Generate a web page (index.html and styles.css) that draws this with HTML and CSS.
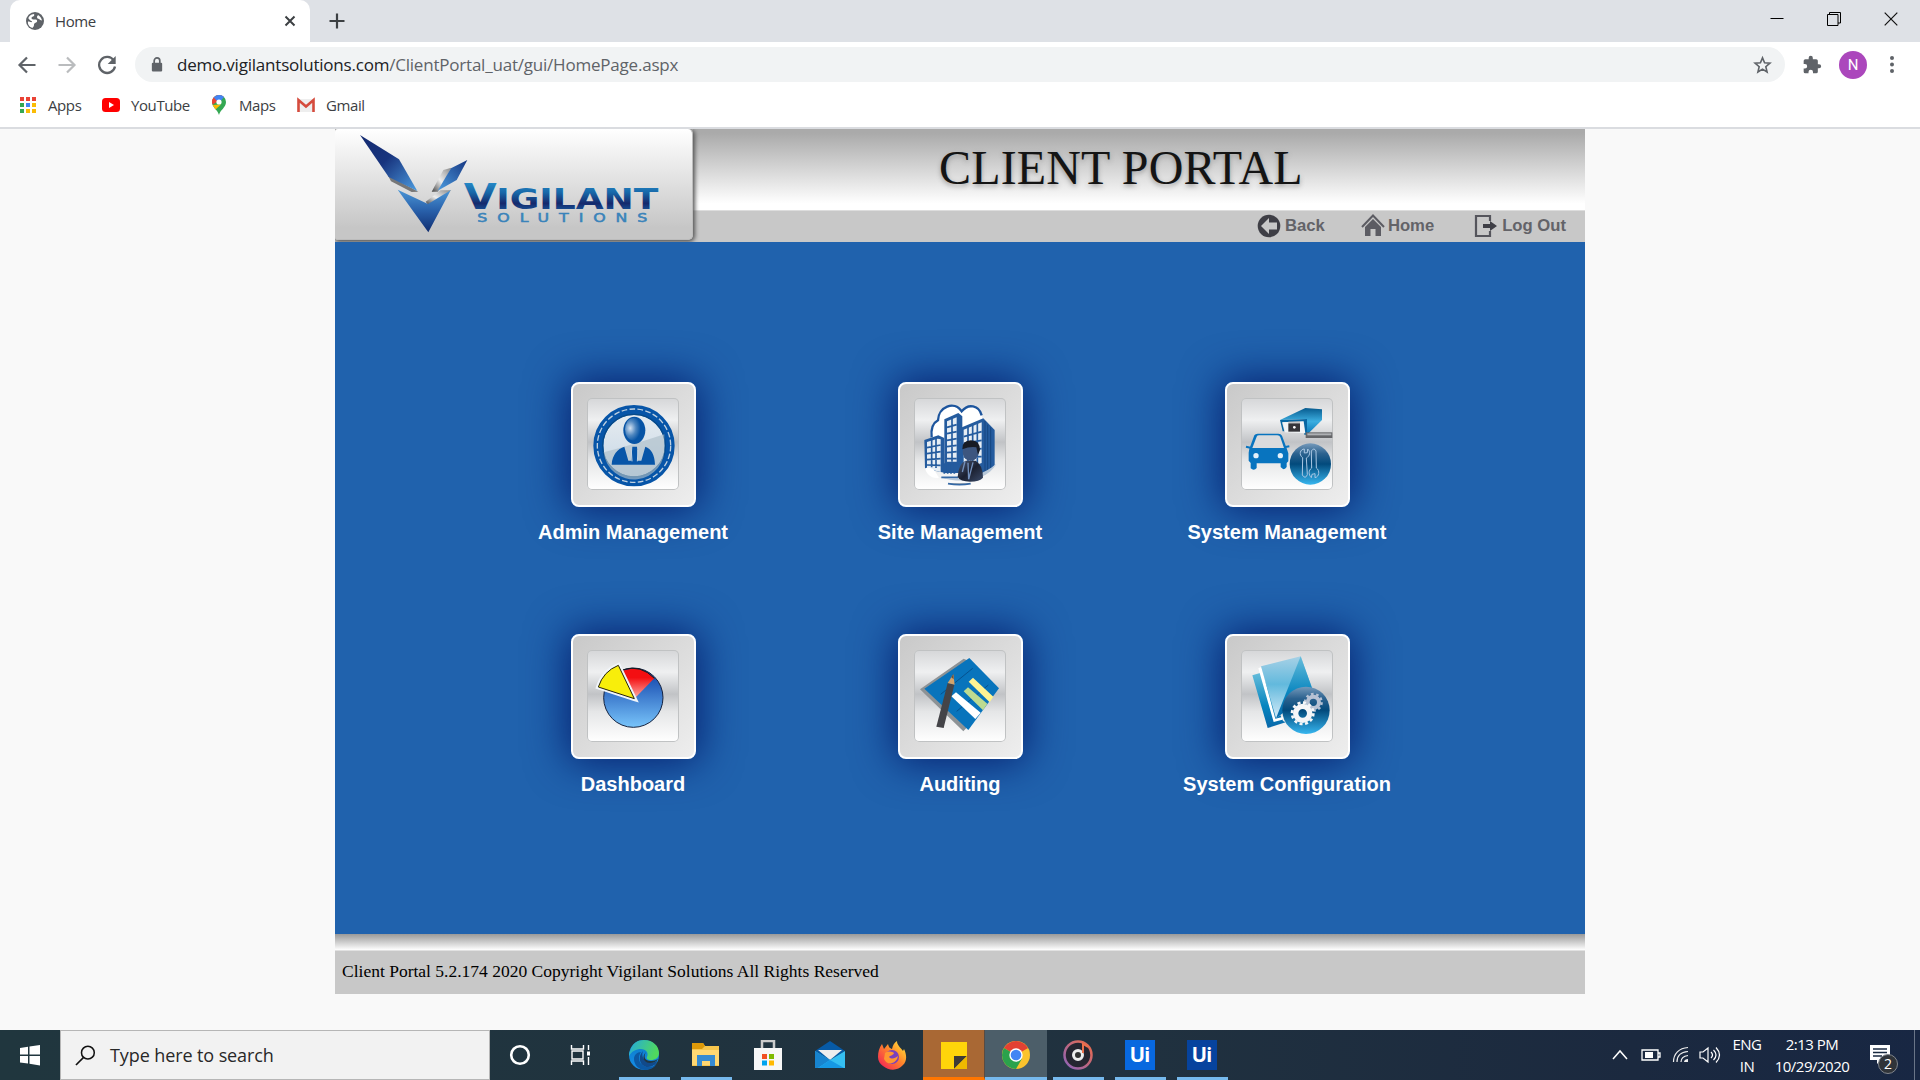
FILE: index.html
```html
<!DOCTYPE html>
<html lang="en">
<head>
<meta charset="utf-8">
<title>Home</title>
<link rel="stylesheet" href="styles.css">
</head>
<body>
<div class="tabstrip">
  <div class="tab">
    <svg class="globe" viewBox="0 0 20 20"><circle cx="10" cy="10" r="9" fill="#5f6368"/><path d="M9 3c1 1.500-.5 2.500-2 3-1 1-.5 2 1 2.500h3c1.500.5 1.500 2.500 0 3s-2 1-2 2.500-1 2-1.500 3C4 16 2.500 13 3 10.500c1.500 0 3 1 4 .5S4 9 3.500 7.500 6 3 9 3zM13 4c2 1 3.500 3 4 5.500-1.500 0-2-1-3-1.500s-2-.5-2-2 1-1 1-2z" fill="#fff"/></svg>
    <span class="tab-title">Home</span>
    <svg class="tab-close" viewBox="0 0 12 12"><path d="M1.500 1.500l9 9m0-9l-9 9" stroke="#3c4043" stroke-width="2"/></svg>
  </div>
  <svg class="newtab" viewBox="0 0 16 16"><path d="M8 .5v15M.5 8h15" stroke="#3c4043" stroke-width="2.200"/></svg>
  <div class="window-controls">
    <svg viewBox="0 0 14 14"><path d="M.5 6.500h13" stroke="#000"/></svg>
    <svg viewBox="0 0 14 14"><path d="M.5 2.500h10.500v11H.5zM2.500 2.500v-2h11v10.500H11" fill="none" stroke="#000"/></svg>
    <svg viewBox="0 0 14 14"><path d="M.7.7l12.600 12.600m0-12.600L.7 13.300" stroke="#111" stroke-width="1.200"/></svg>
  </div>
</div>
<div class="toolbar">
  <svg class="nav-icon" viewBox="0 0 20 20"><path d="M18.500 10H3M10 2.500L2.500 10l7.500 7.500" fill="none" stroke="#5f6368" stroke-width="2.200"/></svg>
  <svg class="nav-icon" viewBox="0 0 20 20"><path d="M1.500 10H17M10 2.500l7.500 7.500-7.500 7.500" fill="none" stroke="#babcbe" stroke-width="2.200"/></svg>
  <svg class="nav-icon" viewBox="0 0 20 20"><path d="M16.800 5.500A8 8 0 1 0 18 11.500" fill="none" stroke="#5f6368" stroke-width="2.300"/><path d="M18.700 1v8h-8z" fill="#5f6368"/></svg>
  <div class="omnibox">
    <svg class="lock" viewBox="0 0 12 16"><path d="M3 7V4a3 3 0 0 1 6 0v3" fill="none" stroke="#5f6368" stroke-width="1.800"/><rect x=".5" y="6" width="11" height="9.500" rx="1.200" fill="#5f6368"/></svg>
    <span class="url"><b>demo.vigilantsolutions.com</b>/ClientPortal_uat/gui/HomePage.aspx</span>
    <svg class="star" viewBox="0 0 20 20"><path d="M10 2.500l2.200 5.200 5.600.4-4.300 3.700 1.300 5.500-4.800-3-4.800 3 1.300-5.500-4.300-3.700 5.600-.4z" fill="none" stroke="#5f6368" stroke-width="1.700"/></svg>
  </div>
  <svg class="ext" viewBox="0 0 24 24"><path d="M20.500 11H19V7a2 2 0 0 0-2-2h-4V3.500a2.500 2.500 0 0 0-5 0V5H4a2 2 0 0 0-2 2v3.800h1.500a2.700 2.700 0 0 1 0 5.400H2V20a2 2 0 0 0 2 2h3.800v-1.500a2.700 2.700 0 0 1 5.400 0V22H17a2 2 0 0 0 2-2v-4h1.500a2.500 2.500 0 0 0 0-5z" fill="#5f6368"/></svg>
  <span class="avatar">N</span>
  <svg class="menu" viewBox="0 0 6 20"><g fill="#5f6368"><circle cx="3" cy="3" r="2"/><circle cx="3" cy="9.500" r="2"/><circle cx="3" cy="16" r="2"/></g></svg>
</div>
<div class="bookmarks">
  <div class="bookmark"><svg viewBox="0 0 18 18"><g fill="#ea4335"><path d="M1 1h4v4H1zM7 1h4v4H7zM13 1h4v4h-4z"/></g><path d="M1 7h4v4H1zM1 13h4v4H1z" fill="#34a853"/><path d="M7 7h4v4H7z" fill="#4285f4"/><path d="M13 7h4v4h-4zM7 13h4v4H7zM13 13h4v4h-4z" fill="#fbbc05"/></svg><span class="w-apps">Apps</span></div>
  <div class="bookmark"><svg viewBox="0 0 18 18"><rect y="2" width="18" height="14" rx="3.500" fill="#f00"/><path d="M7 6l5 3-5 3z" fill="#fff"/></svg><span class="w-youtube">YouTube</span></div>
  <div class="bookmark"><svg viewBox="0 0 18 20"><path d="M9 20C8.200 15.500 2 12.500 2 7a7 7 0 0 1 14 0c0 5.500-6.200 8.500-7 13z" fill="#34a853"/><path d="M2.700 9.800L13.800 2A7 7 0 0 0 3.600 2.600 7 7 0 0 0 2.700 9.800z" fill="#ea4335"/><path d="M3.700 2.500A7 7 0 0 1 14 2L9 8z" fill="#4285f4"/><path d="M2.700 10L11 9.500 5.500 14.500z" fill="#fbbc05"/><circle cx="9" cy="7" r="2.600" fill="#fff"/></svg><span class="w-maps">Maps</span></div>
  <div class="bookmark gmail"><svg viewBox="0 0 18 18"><path d="M1 3h16v13H1z" fill="#eee"/><path d="M1.500 16V4L9 10.500 16.500 4v12" fill="none" stroke="#d54b3d" stroke-width="2.600"/></svg><span class="w-gmail">Gmail</span></div>
</div>
<main class="viewport">
  <div class="portal">
    <header class="header">
      <div class="logo">
        <svg viewBox="30 27 1071 330">
          <defs>
            <linearGradient id="wing" x1="0" y1="0" x2="1" y2="1"><stop offset="0" stop-color="#142a70"/><stop offset=".45" stop-color="#18347e"/><stop offset="1" stop-color="#4c9ce0"/></linearGradient>
            <linearGradient id="wing2" x1="1" y1="0" x2="0" y2="1"><stop offset="0" stop-color="#163681"/><stop offset="1" stop-color="#4c9ce0"/></linearGradient>
            <linearGradient id="tip" x1="0" y1="0" x2="0" y2="1"><stop offset="0" stop-color="#4b96d6"/><stop offset=".5" stop-color="#285fa9"/><stop offset="1" stop-color="#102d70"/></linearGradient>
            <linearGradient id="silver" x1="0" y1="1" x2="1" y2="0"><stop offset="0" stop-color="#444"/><stop offset=".45" stop-color="#eee"/><stop offset="1" stop-color="#888"/></linearGradient>
            <linearGradient id="word" x1="0" y1="190" x2="0" y2="270" gradientUnits="userSpaceOnUse"><stop offset="0" stop-color="#2487c5"/><stop offset=".35" stop-color="#1767a8"/><stop offset=".75" stop-color="#15296c"/><stop offset="1" stop-color="#174f94"/></linearGradient>
          </defs>
          <path d="M188 165l92 50-20 1-62-32z" fill="#777"/>
          <path d="M105 45l117 73 55 95-86-42z" fill="url(#wing)"/>
          <path d="M320 215l35-65 24-7-40 72z" fill="url(#silver)"/>
          <path d="M378 145l49-25-32 60-57 32z" fill="url(#wing2)"/>
          <path d="M302 245l45-34h32l-70 43z" fill="url(#silver)"/>
          <path d="M218 209l91 43 68-41-67 126z" fill="url(#tip)"/>
          <g fill="url(#word)" font-family="DejaVu Sans" font-weight="bold">
            <text x="416" y="268" font-size="107" textLength="99" lengthAdjust="spacingAndGlyphs">V</text>
            <text x="514" y="268" font-size="86" textLength="486" lengthAdjust="spacingAndGlyphs">IGILANT</text>
          </g>
          <text x="457" y="305" font-family="DejaVu Sans" font-size="35" fill="#3a83ba" stroke="#3a83ba" stroke-width="1.500" textLength="540" lengthAdjust="spacingAndGlyphs" letter-spacing="22">SOLUTIONS</text>
        </svg>
      </div>
      <div class="header-main">
        <h1 class="title">CLIENT PORTAL</h1>
        <nav class="nav">
          <a class="nav-link"><svg viewBox="0 0 24 24"><circle cx="12" cy="12" r="11.300" fill="#3f3f46"/><path d="M4 12l8-8v4.500h8v7h-8V20z" fill="#c8c8c8"/></svg>Back</a>
          <a class="nav-link home"><svg viewBox="0 0 24 24"><path d="M1 13L12 1.500 23 13" fill="none" stroke="#5c5c63" stroke-width="2"/><path d="M12 5l8 8v9h-5.500v-7h-5v7H4v-9z" fill="#5c5c63"/></svg>Home</a>
          <a class="nav-link logout"><svg viewBox="0 0 24 24"><path d="M16 7V2H2v20h14v-5" fill="none" stroke="#55555c" stroke-width="2.200"/><path d="M9 10h7V7l7 5-7 5v-3H9z" fill="#3f3f46"/></svg>Log Out</a>
        </nav>
      </div>
    </header>
    <section class="tiles">
      <a class="item"><span class="tile"><span class="frame"><svg viewBox="172 144 276 276">
        <defs><linearGradient id="disc" x1="0" y1="0" x2="0" y2="1"><stop offset="0" stop-color="#e8edf0"/><stop offset="1" stop-color="#c3d5e6"/></linearGradient><radialGradient id="face" cx=".3" cy=".45" r=".6"><stop offset="0" stop-color="#d3e2f2"/><stop offset=".55" stop-color="#4e86bf"/><stop offset="1" stop-color="#0754a5"/></radialGradient></defs>
        <circle cx="313" cy="287" r="107" fill="url(#disc)" stroke="#0755a8" stroke-width="30"/>
        <circle cx="313" cy="287" r="94" fill="none" stroke="#074a88" stroke-width="4"/>
        <path d="M222 307q80-20 182-54v34a91 91 0 0 1-182 20z" fill="#aebfca" opacity=".65"/>
        <circle cx="313" cy="287" r="110" fill="none" stroke="#bfd0e0" stroke-width="4" stroke-dasharray="17 7"/>
        <ellipse cx="314" cy="241" rx="33" ry="41" fill="#0754a5"/><ellipse cx="312" cy="238" rx="26" ry="34" fill="url(#face)"/>
        <path d="M246 344c2-31 18-47 38-54l12 42h9l3-42h14l3 42h10l12-42c18 7 28 23 29 54z" fill="#0755a8"/><path d="M305 300l2 34M325 300l-2 34" stroke="#c5d5e3" stroke-width="3"/>
      </svg></span></span><span class="label">Admin Management</span></a>
      <a class="item"><span class="tile"><span class="frame"><svg viewBox="163 144 276 276">
        <defs><linearGradient id="man" x1="0" y1="0" x2="1" y2="1"><stop offset="0" stop-color="#4c5b79"/><stop offset=".5" stop-color="#1b2030"/><stop offset="1" stop-color="#3a4a69"/></linearGradient></defs>
        <path d="M214 265c-4-26 0-45 20-55 2-39 50-58 73-30 22-27 56-14 60 18l8 80-90 70z" fill="#fff"/>
        <path d="M216 262c-3-26 4-43 19-51 1-41 49-60 71-27 20-25 52-18 60 12" fill="none" stroke="#1d559d" stroke-width="7"/>
        <path d="M194 270l42-14 18 8v104l-58-12z" fill="#245b9e"/><path d="M202 276l32-10 9 2v98l-41-10z" fill="#e6edf4"/><path d="M202 293l41-8m-41 26l41-6m-41 24l41-3m-41 19l41 1m-27-80v86m13-91v93" stroke="#245b9e" stroke-width="5"/>
        <path d="M254 208l42-19 12 10v170h-54z" fill="#245b9e"/><path d="M262 214l29-12v133h-29z" fill="#e6edf4"/><path d="M262 232l29-8m-29 27l29-6m-29 26l29-5m-29 24l29-4m-29 22l29-3m-29 21h29m-14-125v134" stroke="#245b9e" stroke-width="5"/>
        <path d="M307 232l64-27 34 35v105l-28 28h-70z" fill="#245b9e"/><path d="M312 239l54-22v122l-54 18z" fill="#e6edf4"/><path d="M312 260l54-15m-54 35l54-9m-54 30l54-5m-54 25l54-1m-41-91v120m14-125v120m14-125v120" stroke="#245b9e" stroke-width="5"/>
        <path d="M376 213v155M384 224v139M393 232v123" stroke="#164781" stroke-width="3"/>
        <path d="M247 342h50m-43 1v28m10-28v28m10-28v28m10-28v28" stroke="#245b9e" stroke-width="5"/>
        <path d="M196 355c28-7 31 14 42 28-21 4-37-8-42-28z" fill="#fff"/><path d="M238 380c55 13 120 5 172-38-30 53-109 60-172 38z" fill="#b8c8d9"/><path d="M245 382h50m-30 19q35 6 68 0" stroke="#3569a6" stroke-width="5"/>
        <path d="M294 381q2-40 24-49h30q22 13 22 51-10 12-39 12t-37-14z" fill="url(#man)"/><path d="M316 334l-8 32m17-28l2 50 13-51" fill="none" stroke="#7391bd" stroke-width="4"/>
        <ellipse cx="333" cy="305" rx="24" ry="28" fill="#3d567f"/><path d="M308 298q-2-26 26-27 27 1 27 29l-6 14-5-22q-20-3-42 6z" fill="#171b24"/>
      </svg></span></span><span class="label">Site Management</span></a>
      <a class="item"><span class="tile"><span class="frame"><svg viewBox="184 144 276 276">
        <defs><linearGradient id="camera" x1="0" y1="0" x2="0" y2="1"><stop offset="0" stop-color="#075b8f"/><stop offset=".5" stop-color="#3caee0"/><stop offset="1" stop-color="#0674b6"/></linearGradient><linearGradient id="orb" x1="0" y1="0" x2="0" y2="1"><stop offset="0" stop-color="#759abb"/><stop offset=".25" stop-color="#2c628f"/><stop offset=".5" stop-color="#024a7c"/><stop offset="1" stop-color="#37b6ef"/></linearGradient></defs>
        <path d="M209 296l15-40q3-5 10-5h62q8 0 11 6l14 38 5 15v24l-5 5v12q-8 13-18 0v-11h-72v14q-8 10-18 1v-16l-6-7v-24z" fill="#0874bf"/><path d="M218 294l13-34q1-4 8-4h54q7 0 9 6l11 32z" fill="#dadbdd"/><path d="M199 290l13 3m105-2l12-2" stroke="#0874bf" stroke-width="6"/><circle cx="229" cy="317" r="8" fill="#e4f1fa"/><circle cx="302" cy="317" r="8" fill="#e4f1fa"/>
        <path d="M301 210l76-36 50 4v32l-45 44-5-47z" fill="url(#camera)"/><path d="M301 210l81-3v47h-8l-4-39-63 2 7 27h-5z" fill="#0767a3"/><path d="M310 217l62-3 5 36-61-3z" fill="#f1f4f6"/><rect x="326" y="220" width="35" height="25" fill="#353539"/><circle cx="344" cy="232" r="4" fill="#fff"/><path d="M326 216h35" stroke="#999" stroke-width="3"/>
        <path d="M382 247h76v17h-80v-17z" fill="#646568"/><path d="M383 250h72v6h-72z" fill="#aeb0b3"/>
        <circle cx="392" cy="342" r="62" fill="url(#orb)"/><g fill="none" stroke="#a9c7e4" stroke-width="3"><path d="M369 323c-13-9-7-26 5-26v12l9-1 1-11c10 8 6 22-4 27l3 50q-6 15-15 1z"/><path d="M396 354l-1-51q8-12 14 0l1 51c12 8 8 27-4 29v-12l-9 2-2 10c-9-9-9-22 1-29z"/></g>
      </svg></span></span><span class="label">System Management</span></a>
      <a class="item"><span class="tile"><span class="frame"><svg viewBox="172 150 276 276">
        <defs><linearGradient id="pie" x1="0" y1="0" x2="0" y2="1"><stop offset="0" stop-color="#0a3ba6"/><stop offset="1" stop-color="#78c4fa"/></linearGradient><linearGradient id="red" x1="0" y1="0" x2="0" y2="1"><stop offset=".3" stop-color="#f40f12"/><stop offset="1" stop-color="#ffb1aa"/></linearGradient></defs>
        <circle cx="311" cy="293" r="89" fill="url(#pie)" stroke="#152340" stroke-width="3"/><path d="M314 296L271 216q61-27 103 19z" fill="url(#red)"/><path d="M281 209q53-16 93 26" fill="none" stroke="#181818" stroke-width="3"/>
        <path d="M314 296L206 261q15-47 60-65z" fill="#fff" stroke="#f1f5fa" stroke-width="14"/><path d="M314 296L206 261q15-47 60-65z" fill="#f8ee0b" stroke="#26220c" stroke-width="3"/>
      </svg></span></span><span class="label">Dashboard</span></a>
      <a class="item"><span class="tile"><span class="frame"><svg viewBox="163 150 276 276">
        <path d="M181 268l131-92 14 6-100 87 99 110-14 15z" fill="#8d9295"/><path d="M194 266l135-92 89 91-92 125z" fill="#0874bc"/><path d="M243 283l96-78m-48 129l95-79" stroke="#06518e" stroke-width="3"/><path d="M275 289l14-12 74 61-16 19z" fill="#fff"/><path d="M312 274l13-12 58 49-13 20z" fill="#bddb90"/><path d="M327 245l13-12 61 57-11 17z" fill="#fff393"/>
        <path d="M264 249l20 5-32 130-22-4z" fill="#444448"/><path d="M264 249l17-26 4 31z" fill="#d3a36b"/><path d="M275 232l6-10 1 16z" fill="#705038"/>
      </svg></span></span><span class="label">Auditing</span></a>
      <a class="item"><span class="tile"><span class="frame"><svg viewBox="184 150 276 276">
        <defs><linearGradient id="book" x1="0" y1="0" x2="0" y2="1"><stop offset="0" stop-color="#a7d1e6"/><stop offset=".45" stop-color="#62b9dd"/><stop offset="1" stop-color="#d3eaf7"/></linearGradient><linearGradient id="back" x1="0" y1="0" x2="0" y2="1"><stop offset="0" stop-color="#66bddb"/><stop offset=".6" stop-color="#0785bf"/><stop offset="1" stop-color="#0767a9"/></linearGradient></defs>
        <path d="M218 226l26-8 66 145 8 4-54 17z" fill="url(#back)"/><path d="M236 205l9-4 42 155 24-6-3 9-26 7z" fill="#fff"/><path d="M244 199l119-30 37 103-111 83z" fill="url(#book)"/><path d="M363 169L289 355l111-83z" fill="url(#back)"/>
        <circle cx="379" cy="331" r="71" fill="url(#orb)"/><g fill="none"><g stroke="#b7c2d4"><circle cx="401" cy="307" r="17" stroke-width="12"/><circle cx="401" cy="307" r="25" stroke-width="7" stroke-dasharray="7.850 7.850"/></g><g stroke="#f5f6f8"><circle cx="369" cy="340" r="21" stroke-width="16"/><circle cx="369" cy="340" r="32" stroke-width="8" stroke-dasharray="9.140 7.620"/></g></g>
      </svg></span></span><span class="label">System Configuration</span></a>
    </section>
    <div class="footer-edge"></div>
    <footer class="footer"><span>Client Portal 5.2.174 2020 Copyright Vigilant Solutions All Rights Reserved</span></footer>
  </div>
</main>
<div class="taskbar">
  <div class="start"><svg viewBox="0 0 22 22"><path d="M1 4l8-1.200v7.700H1zM10.500 2.500L21 1v9.500H10.500zM1 12h8v7.500L1 18.400zM10.500 12H21v9.500l-10.500-1.700z" fill="#fff"/></svg></div>
  <div class="search"><svg viewBox="0 0 22 22"><circle cx="13.500" cy="8" r="6.700" fill="none" stroke="#111" stroke-width="1.600"/><path d="M9 13l-8 8" stroke="#111" stroke-width="1.700"/></svg><span>Type here to search</span></div>
  <div class="apps">
    <div class="app"><svg viewBox="0 0 30 30"><circle cx="15" cy="15" r="8.800" fill="none" stroke="#fff" stroke-width="2.600"/></svg></div>
    <div class="app"><svg class="taskview" viewBox="0 0 30 30"><path d="M4.500 5v4h12V5M4.500 25v-4h12v4M5 11h11v8H5zM21.500 5v5m0 7v8" fill="none" stroke="#fff" stroke-width="1.400"/><path d="M20 11.500h3v4h-3z" fill="#fff"/></svg></div>
    <div class="app open"><svg viewBox="0 0 30 30"><defs><linearGradient id="edgeTop" x1="0" y1="0" x2="1" y2=".3"><stop offset="0" stop-color="#23a9df"/><stop offset="1" stop-color="#50d95d"/></linearGradient><linearGradient id="edgeSide" x1="0" y1="0" x2="0" y2="1"><stop offset="0" stop-color="#0b7bc6"/><stop offset="1" stop-color="#168ee9"/></linearGradient></defs><circle cx="15" cy="15" r="15" fill="url(#edgeSide)"/><path d="M1 11C3 3 9 0 15 0c9 0 15 6 15 13 0 5-4 7-8 7-3 0-5-1-4-3 2-4-1-8-6-8S3 11 0 16c0-2 0-3 1-5z" fill="url(#edgeTop)"/><path d="M12 12c-5 7 0 15 8 15 3 0 6-1 8-4-3 6-8 7-12 7-7 0-11-6-11-11 0-4 3-7 7-7z" fill="#0c59a4"/><path d="M14 11c-3 7 4 15 14 10 1 1-3 6-9 6-8 0-11-10-5-16z" fill="#114a8b"/><path d="M17 12c-3 5-1 9 5 9 3 0 5-1 7-2-1 2-4 4-8 4-6 0-9-6-4-11z" fill="#203643"/></svg></div>
    <div class="app open"><svg viewBox="0 0 30 30"><path d="M1 3h11l2 3h14v20H1z" fill="#f7c64d"/><path d="M1 3h11l2 3-3 3H1z" fill="#dd9908"/><path d="M1 10h27v15H1z" fill="#ffd873"/><path d="M6 15h18v11h-5v-5h-8v5H6z" fill="#368bd2"/></svg></div>
    <div class="app"><svg viewBox="0 0 30 30"><path d="M9 9V1h12v8" fill="none" stroke="#ccc" stroke-width="2.500"/><path d="M1 8h28v22H1z" fill="#f7f7f7"/><path d="M9 14h5v5H9z" fill="#f25022"/><path d="M16 14h5v5h-5z" fill="#7fba00"/><path d="M9 20.500h5v5H9z" fill="#00a4ef"/><path d="M16 20.500h5v5h-5z" fill="#ffb900"/></svg></div>
    <div class="app"><svg viewBox="0 0 30 30"><path d="M0 11L15 1l15 10-15 9z" fill="#075aa6"/><path d="M3 10h24L15 20z" fill="#eee"/><path d="M0 11l15 9 15-9v17H0z" fill="#35bff2"/><path d="M0 11l15 9-12 8H0z" fill="#1784cf"/><path d="M3 28l12-8 14 8z" fill="#1698e4"/></svg></div>
    <div class="app"><svg viewBox="0 0 30 30"><defs><linearGradient id="fox" x1="1" y1="0" x2="0" y2="1"><stop offset="0" stop-color="#fff13b"/><stop offset=".45" stop-color="#ff862b"/><stop offset="1" stop-color="#f0115d"/></linearGradient></defs><path d="M1 17c0-5 1-9 4-13l2 5 4-5c1 4 2 4 4 5 1-4 2-6 5-8 0 4 3 6 6 10l1-2c3 6 3 12-1 16-5 6-14 6-20 1-3-2-5-5-5-9z" fill="url(#fox)"/><circle cx="15" cy="17" r="7" fill="#7941bd"/><path d="M8 13c4-3 8-1 9 0-1 3-4 2-5 4 3 3 6 1 9-1-1 7-10 11-14 3z" fill="#ff9731"/></svg></div>
    <div class="app notes"><svg viewBox="0 0 30 30"><path d="M2 2h26v27H2z" fill="#ffd50a"/><path d="M15 29V16h13z" fill="#3d3b37"/><path d="M15 29l13-13v13z" fill="#efb900"/></svg></div>
    <div class="app active"><svg viewBox="0 0 30 30"><circle cx="15" cy="15" r="14" fill="#fbc32d"/><path d="M15 15L2.900 8A14 14 0 0 1 27.100 8z" fill="#e34133"/><path d="M2.900 8A14 14 0 0 0 15 29l6-10.500-6-3.500z" fill="#2ba24c"/><circle cx="15" cy="15" r="6.700" fill="#fff"/><circle cx="15" cy="15" r="5.300" fill="#4285f4"/></svg></div>
    <div class="app open"><svg viewBox="0 0 30 30"><defs><linearGradient id="groove" x1="1" y1="0" x2="0" y2="1"><stop offset="0" stop-color="#ef6b45"/><stop offset="1" stop-color="#8a63bd"/></linearGradient></defs><circle cx="15" cy="15" r="13.500" fill="#262631" stroke="url(#groove)" stroke-width="2.500"/><circle cx="15" cy="15" r="4.500" fill="#333" stroke="#eee" stroke-width="3"/><path d="M20 13V4l5 3" fill="none" stroke="#ed704b" stroke-width="2"/></svg></div>
    <div class="app open"><span class="uipath">Ui</span></div>
    <div class="app open"><span class="uipath dark">Ui</span></div>
  </div>
  <div class="tray">
    <svg class="chevron" viewBox="0 0 18 18"><path d="M2 13l7-8 7 8" fill="none" stroke="#fff" stroke-width="1.500"/></svg>
    <svg class="battery" viewBox="0 0 20 14"><path d="M1 2h16v10H1zM17.500 5H19v4h-1.500" fill="none" stroke="#fff" stroke-width="1.300"/><path d="M4 4h8v6H4z" fill="#fff"/></svg>
    <svg class="wifi" viewBox="0 0 18 18"><g fill="none" stroke="#eee" stroke-width="1.200"><path d="M1.500 16C1.500 8 7 2 16 1.500M5 16c0-6 4-10 11-10.500M9 16c0-4 3-6 7-6.500"/></g><path d="M12 16c0-2 2-3 4-3v3z" fill="#eee"/></svg>
    <svg class="speaker" viewBox="0 0 22 18"><g fill="none" stroke="#fff" stroke-width="1.200"><path d="M1 6h3l5-4v14l-5-4H1zM12 6q3 3 0 6M14.500 4q5 5 0 10M17 1.500q7 7.500 0 15"/></g></svg>
    <div class="tray-text lang"><span>ENG</span><span>IN</span></div>
    <div class="tray-text clock"><span class="time">2:13 PM</span><span>10/29/2020</span></div>
    <div class="action"><svg viewBox="0 0 22 22"><path d="M1 1h20v15h-9l-4 4v-4H1z" fill="#fff"/><path d="M4 5h14M4 8.500h14M4 12h9" stroke="#182940" stroke-width="1.300"/></svg><span class="badge">2</span></div>
  </div>
</div>
</body>
</html>
```
FILE: styles.css
```css
* { box-sizing: border-box; }
body { margin: 0; width: 1920px; height: 1080px; overflow: hidden; display: flex; flex-direction: column; background: #f9f9f9; font-family: "Open Sans", "Noto Sans", sans-serif; color: #3c4043; }
svg { display: block; flex: none; }
.tabstrip { height: 42px; flex: none; background: #dee1e6; display: flex; align-items: center; padding-left: 10px; }
.tab { width: 300px; height: 42px; background: #fff; border-radius: 10px 10px 0 0; display: flex; align-items: center; padding: 0 14px 1px 15px; }
.globe { width: 20px; height: 20px; }
.tab-title { margin-left: 10px; font-size: 15px; letter-spacing: -.4px; }
.tab-close { width: 12px; height: 12px; margin-left: auto; }
.newtab { width: 16px; height: 16px; margin-left: 19px; }
.window-controls { margin-left: auto; display: flex; gap: 43px; padding: 0 22px 5px 0; }
.window-controls svg { width: 14px; height: 14px; }
.toolbar { height: 45px; flex: none; background: #fff; display: flex; align-items: center; padding-left: 17px; }
.nav-icon { width: 20px; height: 20px; margin-right: 20px; }
.omnibox { width: 1650px; height: 35px; margin-left: -2px; border-radius: 18px; background: #f1f3f4; display: flex; align-items: center; padding: 0 13px 0 16px; }
.lock { width: 12px; height: 15px; }
.url { margin-left: 14px; font-size: 17px; letter-spacing: -.21px; color: #5f6368; white-space: nowrap; }
.url b { font-weight: 400; color: #202124; }
.star { width: 19px; height: 20px; margin-left: auto; }
.ext { width: 20px; height: 20px; margin-left: 17px; }
.avatar { width: 28px; height: 28px; margin-left: 17px; border-radius: 50%; background: #ab47bc; color: #fff; font: 15px/28px Roboto, sans-serif; text-align: center; }
.menu { width: 6px; height: 20px; margin-left: 22px; }
.bookmarks { height: 42px; flex: none; background: #fff; border-bottom: 2px solid #dadce0; display: flex; align-items: center; padding: 0 0 5px 19px; gap: 20px; }
.bookmark { display: flex; align-items: center; gap: 11px; font-size: 15px; white-space: nowrap; letter-spacing: -.4px; }
.bookmark svg { width: 18px; height: 20px; }
.w-apps { width: 34px; } .w-youtube { width: 59px; } .w-maps { width: 38px; } .w-gmail { width: 40px; }
.viewport { flex: 1; min-height: 0; display: flex; justify-content: center; align-items: flex-start; }
.portal { width: 1250px; }
.header { height: 113px; display: flex; align-items: flex-start; background: #c8c8c8; overflow: hidden; }
.logo { width: 358px; height: 111px; flex: none; border: solid #bcbcbc; border-width: 0 1px 1px 0; border-radius: 3px 5px 5px 3px; background: linear-gradient(#fff, #c6c6c6 90%); box-shadow: 1px 1px 4px 1px #555; position: relative; z-index: 1; }
.logo svg { width: 357px; height: 110px; }
.header-main { flex: 1; }
.title { margin: 0; height: 82px; padding: 12px 0 0 246px; background: linear-gradient(#aaa 5%, #fff 92%); border-bottom: 1px solid #ddd; font: 400 48px/54px "Liberation Serif", serif; letter-spacing: .15px; color: #141414; text-shadow: 0 2px 5px #999; white-space: nowrap; }
.nav { height: 31px; display: flex; justify-content: flex-end; align-items: center; padding: 0 19px 2px 0; }
.nav-link { display: flex; align-items: center; gap: 4px; font: bold 16.670px/30px "Liberation Sans", sans-serif; color: #636368; }
.nav-link svg { width: 24px; height: 24px; }
.nav-link.home { margin-left: 36px; gap: 3px; }
.nav-link.logout { margin-left: 40px; gap: 4px; }
.tiles { height: 692px; background: #2062ad; display: grid; grid-template-columns: repeat(3, 327px); grid-auto-rows: 252px; justify-content: center; padding-top: 140px; }
.item { display: flex; flex-direction: column; align-items: center; }
.tile { width: 125px; height: 125px; border: 2px solid #fff; border-radius: 8px; background: linear-gradient(135deg, #c9c9c9, #eee); box-shadow: 0 0 42px 3px #05206f; display: flex; align-items: flex-start; justify-content: center; padding-top: 14px; }
.frame { width: 92px; height: 92px; border-radius: 5px; background: linear-gradient(#d5d6d8, #eff0f1 24%, #c1c3c6 48%, #e5e6e7 67%, #fff); box-shadow: inset 0 0 0 1px #c0c2c3; }
.frame svg { width: 92px; height: 92px; }
.label { margin-top: 13px; font: bold 20px/24px "Liberation Sans", sans-serif; color: #fff; white-space: nowrap; }
.footer-edge { height: 16px; background: linear-gradient(#999, #fff); }
.footer { height: 44px; background: #c8c8c8; border-top: 1px solid #e1e1e1; padding-left: 7px; font: 17.500px/40px "Liberation Serif", serif; color: #000; white-space: nowrap; }
.taskbar { height: 50px; flex: none; display: flex; background: linear-gradient(90deg, #20363e, #20313f 60%, #1b293f 85%, #182743); color: #fff; }
.start { width: 60px; display: grid; place-items: center; }
.start svg { width: 22px; height: 22px; }
.search { width: 430px; border: 1px solid #b6b6b6; background: #f2f2f2; display: flex; align-items: center; padding-left: 14px; color: #282828; }
.search svg { width: 21px; height: 21px; }
.search span { margin-left: 14px; font-size: 18px; letter-spacing: -.1px; white-space: nowrap; }
.apps { display: flex; margin-left: -1px; }
.app { width: 62px; height: 50px; display: flex; align-items: center; justify-content: center; }
.app svg { width: 30px; height: 30px; }
.app.open { background: linear-gradient(#76b9ed, #76b9ed) center bottom / 51px 3px no-repeat; }
.app.notes { background: #a96834; border-right: 1px solid #584b43; border-bottom: 3px solid #ff7600; padding-top: 3px; }
.app.active { background: #4c5e69; border-bottom: 3px solid #76b9ed; padding-top: 3px; }
.uipath { width: 30px; height: 30px; background: #0868df; font: bold 20px/30px Inter, sans-serif; text-align: center; }
.uipath.dark { background: #06439e; }
.tray { flex: 1; display: flex; align-items: center; justify-content: flex-end; padding-right: 5px; }
.chevron { width: 18px; height: 18px; }
.battery { width: 20px; height: 14px; margin-left: 12px; }
.wifi { width: 18px; height: 18px; margin-left: 11px; }
.speaker { width: 22px; height: 18px; margin-left: 9px; }
.tray-text { display: flex; flex-direction: column; align-items: center; font-size: 15px; line-height: 22px; letter-spacing: -.5px; white-space: nowrap; }
.lang { width: 32px; margin-left: 10px; }
.clock { width: 78px; margin-left: 10px; }
.action { position: relative; width: 46px; height: 50px; margin-left: 18px; padding-top: 14px; border-right: 1px solid #697587; }
.action svg { width: 22px; height: 22px; }
.badge { position: absolute; left: 9px; top: 24px; width: 20px; height: 20px; border: 1px solid #81868d; border-radius: 50%; background: #303439; font-size: 14px; line-height: 18px; text-align: center; }
```
